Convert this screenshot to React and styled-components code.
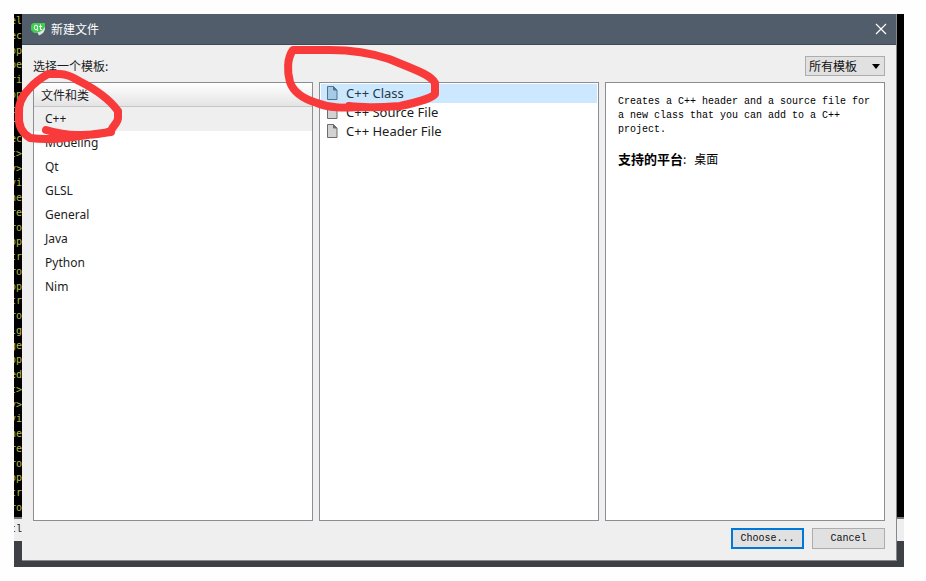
import React from "react";
import styled, { createGlobalStyle } from "styled-components";

const cjk = '"Noto Sans CJK SC", sans-serif';

const GlobalStyle = createGlobalStyle`
  * { box-sizing: border-box; }
  body { margin: 0; background: #fefefe; color: #1c1c1c; font: 12px/16px ${cjk}; }
  button, select { font: inherit; color: inherit; margin: 0; }
  ul { list-style: none; margin: 0; padding: 0; }
  p { margin: 0; }
`;

const Desktop = styled.div`
  position: relative;
  display: grid;
  grid-template-columns: 8px minmax(0, 1fr) 7px;
  height: calc(100vh - 28px);
  min-height: 360px;
  margin: 14px 22px 14px 14px;
  padding-bottom: 6px;
  background: #3d4145;
`;

const Strip = styled.div`
  display: flex;
  flex-direction: column;
  min-width: 0;
  overflow: hidden;
`;

const Code = styled.div`
  flex: 1;
  display: flex;
  flex-direction: column;
  justify-content: space-between;
  min-height: 0;
  padding-bottom: 2px;
  overflow: hidden;
  background: #000;
  color: #b8bb48;
  font: 10px/14px "DejaVu Sans Mono", monospace;
`;

const CodeLine = styled.span`
  display: flex;
  justify-content: flex-end;
  height: 14px;
  white-space: pre;
`;

const StatusBar = styled.div`
  display: flex;
  justify-content: flex-end;
  height: 24px;
  margin-bottom: 20px;
  border-top: 2px solid #777;
  background: #eee;
  color: #111;
  font: 10px/22px "Liberation Mono", monospace;
`;

const Dialog = styled.section`
  display: flex;
  flex-direction: column;
  min-width: 0;
  border: solid #85898d;
  border-width: 0 1px 1px 0;
  background: #efefef;
`;

const TitleBar = styled.header`
  display: flex;
  align-items: center;
  height: 31px;
  padding: 0 9px;
  border-bottom: 1px solid #3f4a57;
  background: #515d6b;
  color: #fff;
`;

const Title = styled.h1`
  flex: 1;
  margin: 0 0 0 5px;
  font-size: 12px;
  font-weight: 400;
`;

const CloseButton = styled.button`
  display: flex;
  padding: 0;
  border: 0;
  background: none;
  color: #fff;
`;

const Body = styled.div`
  flex: 1;
  display: flex;
  flex-direction: column;
  min-height: 0;
  padding: 11px;
`;

const FilterRow = styled.div`
  display: flex;
  align-items: center;
  justify-content: space-between;
  margin-bottom: 6px;
`;

const SelectBox = styled.div`
  position: relative;
  width: 80px;
  height: 20px;

  select {
    appearance: none;
    width: 100%;
    height: 100%;
    padding: 0 0 0 3px;
    border: 1px solid #adadad;
    border-radius: 0;
    background: #e1e1e1;
    color: #111;
  }
  svg {
    position: absolute;
    top: 8px;
    right: 5px;
    pointer-events: none;
  }
`;

const Panels = styled.div`
  flex: 1;
  display: grid;
  grid-template-columns: repeat(3, minmax(0, 1fr));
  gap: 6px;
  min-height: 0;
`;

const Panel = styled.div`
  min-width: 0;
  overflow: hidden;
  border: 1px solid #8b8f94;
  background: #fff;
`;

const PanelHeading = styled.h2`
  height: 24px;
  margin: 0;
  padding: 0 7px;
  border-bottom: 1px solid #c6c6c6;
  background: linear-gradient(#fff, #e4e4e4);
  font-size: 12px;
  font-weight: 400;
  line-height: 24px;
`;

const Category = styled.button`
  display: block;
  width: 100%;
  height: 24px;
  padding: 0 11px;
  border: 0;
  background: ${(p) => (p.$selected ? "#efefef" : "transparent")};
  font: 12px/24px "Noto Sans", ${cjk};
  text-align: left;
`;

const TemplateList = styled.ul`
  padding: 1px;
`;

const Template = styled.button`
  display: flex;
  align-items: center;
  gap: 8px;
  width: 100%;
  height: 19px;
  padding: 0 6px 1px;
  border: 0;
  background: ${(p) => (p.$selected ? "#cce8ff" : "transparent")};
  color: ${(p) => (p.$selected ? "#26384a" : "#1c1c1c")};
  font: 13px/18px "Noto Sans", ${cjk};
  text-align: left;
`;

const Details = styled(Panel)`
  padding: 12px;
  color: #000;
`;

const Description = styled.p`
  margin-bottom: 14px;
  font: 10px/14px "Liberation Mono", monospace;
`;

const Platforms = styled.p`
  strong { font-size: 13px; }
  span { margin-left: 8px; }
`;

const Actions = styled.footer`
  display: flex;
  justify-content: flex-end;
  gap: 8px;
  margin-top: 7px;
`;

const ActionButton = styled.button`
  width: 73px;
  height: 21px;
  padding: 0;
  border: ${(p) => (p.$primary ? "2px solid #0078d7" : "1px solid #adadad")};
  background: #e1e1e1;
  color: #111;
  font: 10px/14px "Liberation Mono", monospace;
`;

const Annotations = styled.svg`
  position: absolute;
  top: 0;
  left: 0;
  width: 440px;
  height: 140px;
  overflow: visible;
  pointer-events: none;
  fill: none;
  stroke: #f93a3a;
  stroke-width: 8px;
  stroke-linecap: round;
  stroke-linejoin: round;
`;

const codeLines = [
  "el", "ec", "op", "pe", "ri", "op", "tr", "ro", "ec", "t>", "y>", "vi", "ne",
  "re", "ro", "op", "tr", "ro", "op", "tr", "ro", "lg", "ge", "op", "ed", "t>",
  "y>", "vi", "ne", "re", "ro", "op", "tr", "ro",
];
const categories = ["C++", "Modeling", "Qt", "GLSL", "General", "Java", "Python", "Nim"];
const templates = ["C++ Class", "C++ Source File", "C++ Header File"];

function QtIcon() {
  return (
    <svg width="15" height="14" viewBox="0 0 15 14" aria-hidden="true">
      <path d="M2 1h12v6l-4 4H3L0 8V3z" fill="#41cd52" />
      <path d="M14 5c.3 4-2 7-6 8.500L6.500 10.500C10 10 12 8 14 5z" fill="#dfe5e5" />
      <ellipse cx="5" cy="5.500" rx="1.700" ry="2.400" fill="none" stroke="#fff" />
      <path d="M5.500 7l1.500 2M9.500 2.500v5h1.500M8 4.500h3" fill="none" stroke="#fff" />
    </svg>
  );
}

function FileIcon({ selected }) {
  const line = selected ? "#52738a" : "#6c6c6c";
  return (
    <svg width="11" height="14" viewBox="0 0 11 14" aria-hidden="true">
      <path d="M.5.5h6l3.500 3.500v9.500H.5z" fill={selected ? "#a5cbe6" : "#d2d2d2"} stroke={line} />
      <path d="M6.500.5V4H10z" fill={line} stroke={line} />
    </svg>
  );
}

export default function App() {
  return (
    <>
      <GlobalStyle />
      <Desktop>
        <Strip aria-hidden="true">
          <Code>
            {codeLines.map((line, i) => <CodeLine key={i}>{line}</CodeLine>)}
          </Code>
          <StatusBar>tl</StatusBar>
        </Strip>
        <Dialog role="dialog" aria-labelledby="dialog-title">
          <TitleBar>
            <QtIcon />
            <Title id="dialog-title">新建文件</Title>
            <CloseButton type="button" aria-label="关闭">
              <svg width="12" height="12" viewBox="0 0 12 12" aria-hidden="true">
                <path d="M1 1l10 10M11 1L1 11" stroke="currentColor" strokeWidth="1.200" />
              </svg>
            </CloseButton>
          </TitleBar>
          <Body>
            <FilterRow>
              <label htmlFor="template-filter">选择一个模板:</label>
              <SelectBox>
                <select id="template-filter"><option>所有模板</option></select>
                <svg width="8" height="5" viewBox="0 0 8 5" aria-hidden="true">
                  <path d="M0 0h8L4 5z" fill="#000" />
                </svg>
              </SelectBox>
            </FilterRow>
            <Panels>
              <Panel>
                <PanelHeading>文件和类</PanelHeading>
                <ul>
                  {categories.map((name, i) => (
                    <li key={name}><Category type="button" $selected={i === 0}>{name}</Category></li>
                  ))}
                </ul>
              </Panel>
              <Panel>
                <TemplateList>
                  {templates.map((name, i) => (
                    <li key={name}>
                      <Template type="button" $selected={i === 0}>
                        <FileIcon selected={i === 0} />
                        {name}
                      </Template>
                    </li>
                  ))}
                </TemplateList>
              </Panel>
              <Details>
                <Description>
                  Creates a C++ header and a source file for a new class that you can add to a C++ project.
                </Description>
                <Platforms><strong>支持的平台</strong>:<span>桌面</span></Platforms>
              </Details>
            </Panels>
            <Actions>
              <ActionButton type="button" $primary>Choose...</ActionButton>
              <ActionButton type="button">Cancel</ActionButton>
            </Actions>
          </Body>
        </Dialog>
        <Strip aria-hidden="true">
          <Code />
          <StatusBar />
        </Strip>
        <Annotations viewBox="0 0 440 140" aria-hidden="true">
          <path d="M32 116C42 119 53 121 63 121C80 121 92 119 97 117C99 111 104 109 104 104L104 97C96 86 81 75 65 67C57 62 51 60 46 60L34 60C27 64 20 69 15 75C8 82 4 91 5 101C4 111 8 119 16 124C31 126 48 125 66 122L97 118" />
          <path d="M335 92C350 94 372 93 386 92C401 89 418 84 421 80L421 69C417 61 402 56 375 45C357 39 338 36 316 36L279 36C273 44 273 58 276 68C280 80 293 86 303 89C315 94 328 94 345 93" />
        </Annotations>
      </Desktop>
    </>
  );
}
